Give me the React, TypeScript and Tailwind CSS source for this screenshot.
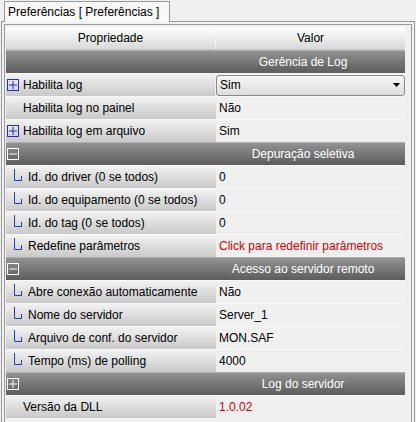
import React from "react";

type Row =
  | { kind: "section"; title: string; icon: "minus" | "plus" }
  | { kind: "prop"; label: string; value: string; lead?: "plus" | "tree" | "none"; red?: boolean; combo?: boolean };

const rows: Row[] = [
  { kind: "section", title: "Gerência de Log", icon: "none" as any },
  { kind: "prop", label: "Habilita log", value: "Sim", lead: "plus", combo: true },
  { kind: "prop", label: "Habilita log no painel", value: "Não", lead: "none" },
  { kind: "prop", label: "Habilita log em arquivo", value: "Sim", lead: "plus" },
  { kind: "section", title: "Depuração seletiva", icon: "minus" },
  { kind: "prop", label: "Id. do driver (0 se todos)", value: "0", lead: "tree" },
  { kind: "prop", label: "Id. do equipamento (0 se todos)", value: "0", lead: "tree" },
  { kind: "prop", label: "Id. do tag (0 se todos)", value: "0", lead: "tree" },
  { kind: "prop", label: "Redefine parâmetros", value: "Click para redefinir parâmetros", lead: "tree", red: true },
  { kind: "section", title: "Acesso ao servidor remoto", icon: "minus" },
  { kind: "prop", label: "Abre conexão automaticamente", value: "Não", lead: "tree" },
  { kind: "prop", label: "Nome do servidor", value: "Server_1", lead: "tree" },
  { kind: "prop", label: "Arquivo de conf. do servidor", value: "MON.SAF", lead: "tree" },
  { kind: "prop", label: "Tempo (ms) de polling", value: "4000", lead: "tree" },
  { kind: "section", title: "Log do servidor", icon: "plus" },
  { kind: "prop", label: "Versão da DLL", value: "1.0.02", lead: "none", red: true },
];

function BoxIcon({ sign, color }: { sign: "plus" | "minus"; color: string }) {
  return (
    <svg width="12" height="12" viewBox="0 0 12 12" className="shrink-0">
      <rect x="0.5" y="0.5" width="11" height="11" fill="none" stroke={color} />
      <line x1="2" y1="6" x2="10" y2="6" stroke={color} />
      {sign === "plus" && <line x1="6" y1="2" x2="6" y2="10" stroke={color} />}
    </svg>
  );
}

function TreeIcon() {
  return (
    <svg width="10" height="22" viewBox="0 0 10 22" className="shrink-0">
      <path d="M0.5 3V14.5H7" stroke="#1f3fd0" fill="none" />
      <path d="M7.5 10V15" stroke="#1f3fd0" fill="none" />
    </svg>
  );
}

export default function App() {
  return (
    <div
      className="relative h-[422px] w-[416px] overflow-hidden bg-[#f0f0f0] text-[12px] text-black"
      style={{ fontFamily: '"Liberation Sans", Arial, sans-serif' }}
    >
      <div className="relative z-10 ml-[4px] mt-[1px] -mb-px flex h-[21px] w-[166px] items-center border border-b-0 border-[#9a9a9a] bg-[#f7f7f7] pl-[3px]">
        Preferências [ Preferências ]
      </div>
      <div className="mx-px h-[420px] border border-[#9a9a9a] p-[2px]">
        <div className="h-full border border-[#9a9a9a] bg-[#f0f0f0] pl-px pt-[2px]">
          <div className="w-[399px]">
            <div className="flex h-[23px] border-b border-[#c8c8c8] bg-gradient-to-b from-white to-[#d9d9d9]">
              <div className="flex w-[210px] items-center justify-center border-r border-[#f4f4f4]">Propriedade</div>
              <div className="flex flex-1 items-center justify-center">Valor</div>
            </div>
            {rows.map((r, i) =>
              r.kind === "section" ? (
                <div
                  key={i}
                  className="flex h-[23px] items-center border-t border-[#b0b0b0] bg-gradient-to-b from-[#939393] to-[#5c5c5c] text-white"
                >
                  <div className="flex w-[195px] pl-[1px]">
                    {r.icon === "minus" || r.icon === "plus" ? <BoxIcon sign={r.icon} color="#ffffff" /> : null}
                  </div>
                  <div className="flex-1 text-center">{r.title}</div>
                </div>
              ) : (
                <div key={i} className="flex h-[23px] border-t border-[#fafafa]">
                  <div className="flex w-[210px] items-center bg-gradient-to-b from-[#f2f2f2] to-[#c9c9c9]">
                    {r.lead === "plus" && (
                      <div className="flex items-center pl-[1px] pr-[4px]">
                        <BoxIcon sign="plus" color="#2a2ad0" />
                      </div>
                    )}
                    {r.lead === "tree" && (
                      <div className="flex items-center pl-[8px] pr-[4px]">
                        <TreeIcon />
                      </div>
                    )}
                    {r.lead === "none" && <div className="w-[17px]" />}
                    <span className="whitespace-nowrap">{r.label}</span>
                  </div>
                  <div className="flex flex-1 items-center bg-[#f0f0f0]">
                    {r.combo ? (
                      <div className="ml-px flex h-[21px] w-[189px] items-center justify-between rounded-[3px] border border-[#8a8a8a] bg-gradient-to-b from-[#f6f6f6] to-[#dedede] pl-[3px] pr-[4px]">
                        <span>Sim</span>
                        <svg width="7" height="4" viewBox="0 0 7 4">
                          <path d="M0 0H7L3.5 4Z" fill="#000" />
                        </svg>
                      </div>
                    ) : (
                      <span className={"whitespace-nowrap pl-[3px] " + (r.red ? "text-[#d40000]" : "")}>{r.value}</span>
                    )}
                  </div>
                </div>
              )
            )}
          </div>
        </div>
      </div>
    </div>
  );
}
